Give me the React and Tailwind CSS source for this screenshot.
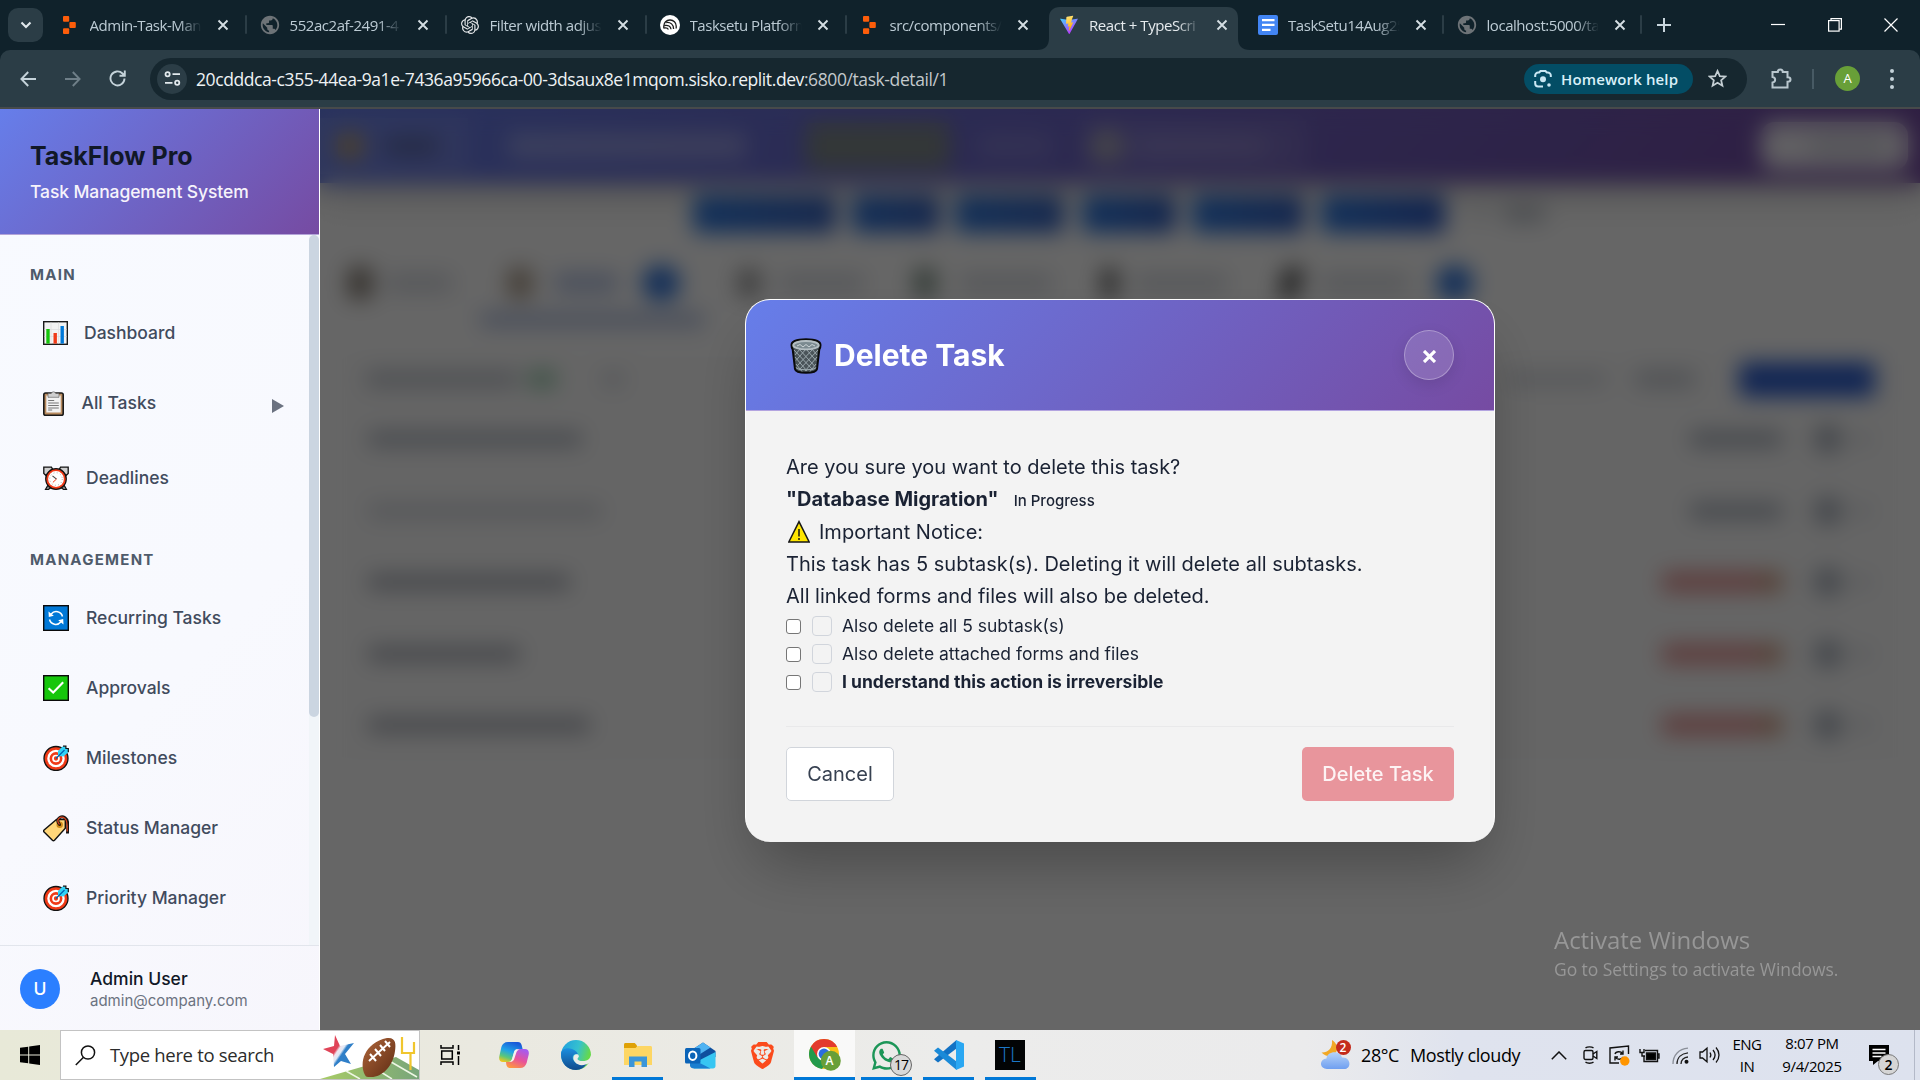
import React from "react";
import { SiOpenai, SiBrave } from "react-icons/si";
import { FaWhatsapp } from "react-icons/fa";
import { MdPublic } from "react-icons/md";

/* ---------- browser icons ---------- */

const Replit = () => (
  <svg className="h-[18px] w-[13px]" viewBox="0 0 13 18" fill="#fd5d0a">
    <rect x="0" y="0" width="6.2" height="5.7" rx="1" />
    <rect x="6.4" y="6" width="6.4" height="5.9" rx="1" />
    <rect x="0" y="12.2" width="6.2" height="5.8" rx="1" />
  </svg>
);

const Vite = () => (
  <svg className="h-[20px] w-[20px]" viewBox="0 0 32 32">
    <defs>
      <linearGradient id="vt1" x1="0" y1="0" x2="0.6" y2="1">
        <stop offset="0" stopColor="#41d1ff" />
        <stop offset="1" stopColor="#bd34fe" />
      </linearGradient>
      <linearGradient id="vt2" x1="0" y1="0" x2="0.2" y2="1">
        <stop offset="0" stopColor="#ffea83" />
        <stop offset="1" stopColor="#ffa800" />
      </linearGradient>
    </defs>
    <path fill="url(#vt1)" d="M29.9 6.8 17 30a.7.7 0 0 1-1.2 0L2.1 6.8c-.3-.5.2-1.1.8-1l13.1 2.3 13-2.3c.6-.1 1.1.5.9 1z" />
    <path fill="url(#vt2)" d="M22.3 1l-9.7 1.9-.8.7-.6 10.4 3.8-.5-.9 5 2.8-.6-1.4 7 .8.3 6.6-13.6-3.5.7 1.3-5.7 2.1-5.1z" />
  </svg>
);

const Docs = () => (
  <svg className="h-[20px] w-[20px]" viewBox="0 0 20 20">
    <rect width="20" height="20" rx="2" fill="#4285f4" />
    <path d="M4 5.2h12.5M4 9.8h12.5M4 14.8h8.5" stroke="#fff" strokeWidth="2.2" />
  </svg>
);

const TasksetuMark = () => (
  <svg className="h-[20px] w-[20px]" viewBox="0 0 20 20">
    <circle cx="10" cy="10" r="10" fill="#fff" />
    <g fill="none" stroke="#1c1c1c" strokeWidth="1.3">
      <path d="M3.800 13.500V11a6 6 0 0 1 6-6h.4a6 6 0 0 1 6 6v2.500" />
      <path d="M6.200 7.500c4.500-.5 7.400 2 7.400 6.500" />
      <path d="M4.200 10.500c4-.8 6.600.8 6.800 3.800" />
      <path d="M4.200 13c2-.5 3.500 0 4.200 1.500" />
    </g>
  </svg>
);

const Cross = ({ className }) => (
  <svg className={className} viewBox="0 0 12 12" fill="none" stroke="currentColor" strokeWidth="1.9">
    <path d="M1.500 1.500l9 9M10.500 1.500l-9 9" />
  </svg>
);

const tabs = [
  { t: "Admin-Task-Man", icon: <Replit />, w: "w-[200px]" },
  { t: "552ac2af-2491-4", icon: <MdPublic className="h-[22px] w-[22px] text-[#6d7377]" />, w: "w-[200px]" },
  { t: "Filter width adjus", icon: <SiOpenai className="h-[18px] w-[18px] text-[#e3e6e8]" />, w: "w-[200px]" },
  { t: "Tasksetu Platform", icon: <TasksetuMark />, w: "w-[200px]" },
  { t: "src/components/", icon: <Replit />, w: "w-[199.5px]" },
  { t: "React + TypeScri", icon: <Vite />, w: "w-[199px]", active: true },
  { t: "TaskSetu14Aug25", icon: <Docs />, w: "w-[198.5px]" },
  { t: "localhost:5000/ta", icon: <MdPublic className="h-[22px] w-[22px] text-[#6d7377]" />, w: "w-[198px]" },
];

const Tab = ({ tab, sep }) => (
  <div className={`relative flex h-[50px] ${tab.w} shrink-0 items-center pl-[12px]`}>
    {tab.active && (
      <svg className="absolute -left-[9px] top-[7px] h-[43px] w-[213px]" viewBox="0 0 213 43" fill="#2b3d46">
        <path d="M0 43c8 0 12-4 12-12V11C12 4 16 0 23 0h167c7 0 11 4 11 11v20c0 8 4 12 12 12z" />
      </svg>
    )}
    <div className="relative flex w-[22px] justify-center">{tab.icon}</div>
    <div
      className={`relative ml-[9px] mt-[1px] w-[113px] whitespace-nowrap text-[15px] tracking-[-0.45px] [mask-image:linear-gradient(to_right,black_78%,transparent_99%)] ${
        tab.active ? "text-[#e6ebee]" : "text-[#bccbd4]"
      }`}
    >
      {tab.t}
    </div>
    <Cross className="relative ml-[14px] h-[12px] w-[12px] text-[#d5dee3]" />
    {sep && <div className="absolute right-0 top-[15px] h-[19px] w-[2px] rounded bg-[#2b3d46]" />}
  </div>
);

const Browser = () => (
  <div className="h-[109px] bg-[#10222b] font-['Open_Sans','Noto_Sans',sans-serif]">
    <div className="flex h-[50px] items-center">
      <div className="ml-[8px] mr-[3.5px] flex h-[34px] w-[35px] shrink-0 items-center justify-center rounded-[10px] bg-[#2b3d46]">
        <svg className="h-[8px] w-[12px]" viewBox="0 0 12 8" fill="none" stroke="#e1e8ec" strokeWidth="2.1">
          <path d="M1.500 1.500L6 6l4.500-4.500" />
        </svg>
      </div>
      {tabs.map((tab, i) => (
        <Tab key={i} tab={tab} sep={i !== 4 && i !== 5} />
      ))}
      <svg className="ml-[15px] h-[14px] w-[14px]" viewBox="0 0 14 14" stroke="#c9d6dd" strokeWidth="2">
        <path d="M7 0v14M0 7h14" />
      </svg>
      <div className="ml-auto mr-[22px] flex items-center gap-[42.5px]">
        <svg className="h-[14px] w-[14px]" viewBox="0 0 14 14" stroke="#fff" strokeWidth="1.200">
          <path d="M0 6.500h14" />
        </svg>
        <svg className="h-[14px] w-[14px]" viewBox="0 0 14 14" fill="none" stroke="#fff" strokeWidth="1.200">
          <rect x="0.600" y="2.600" width="10.500" height="10.500" />
          <path d="M3 2.500V.6h10.400v10.500h-2" />
        </svg>
        <svg className="h-[14px] w-[14px]" viewBox="0 0 14 14" stroke="#fff" strokeWidth="1.200">
          <path d="M.5.5l13 13M13.500.5l-13 13" />
        </svg>
      </div>
    </div>
    <div className="flex h-[59px] items-center rounded-t-[10px] border-b-2 border-[#474a4b] bg-[#2b3d46]">
      <svg className="ml-[20px] h-[16px] w-[16px]" viewBox="0 0 16 16" fill="none" stroke="#c5d3da" strokeWidth="1.900">
        <path d="M16 8H1.500M8.200 1L1.400 8l6.800 7" />
      </svg>
      <svg className="ml-[29px] h-[16px] w-[16px]" viewBox="0 0 16 16" fill="none" stroke="#6f7f88" strokeWidth="1.900">
        <path d="M0 8h14.500M7.800 1l6.800 7-6.800 7" />
      </svg>
      <svg className="ml-[28px] h-[17px] w-[17px]" viewBox="0 0 17 17" fill="none" stroke="#c5d3da" strokeWidth="1.900">
        <path d="M15.500 8.500a7 7 0 1 1-2-5l2 2M15.800.5v5.300h-5.300" />
      </svg>
      <div className="ml-[24px] flex h-[42px] w-[1597px] items-center rounded-full bg-[#16272f] pl-[7px]">
        <div className="flex h-[30px] w-[30px] items-center justify-center rounded-full bg-[#2b3d46]">
          <svg className="h-[15px] w-[17px]" viewBox="0 0 17 15" fill="none" stroke="#e3eaee" strokeWidth="1.800">
            <circle cx="3.600" cy="3.200" r="2.100" />
            <path d="M8.500 3.200H16M1 11.800h7.500" />
            <circle cx="13.200" cy="11.800" r="2.100" />
          </svg>
        </div>
        <div className="ml-[9px] mt-[2px] whitespace-nowrap text-[17.5px] tracking-[-0.41px] text-[#eef2f4]">
          20cdddca-c355-44ea-9a1e-7436a95966ca-00-3dsaux8e1mqom.sisko.replit.dev<span className="text-[#c3c9cc]">:6800/task-detail/1</span>
        </div>
        <div className="ml-auto flex h-[30px] w-[169px] items-center rounded-full bg-[#034d65] pl-[10px]">
          <svg className="h-[18px] w-[18px]" viewBox="0 0 18 18" fill="none" stroke="#c9e8f4" strokeWidth="2">
            <path d="M1.200 7V5.500a3 3 0 0 1 3-3h1L6.500 1h5l1.300 1.500h1a3 3 0 0 1 3 3V7M1.200 11v2.500a3 3 0 0 0 3 3H9" />
            <circle cx="9" cy="9.300" r="3" fill="#c9e8f4" stroke="none" />
            <circle cx="15" cy="15" r="1.800" fill="#c9e8f4" stroke="none" />
          </svg>
          <span className="ml-[9px] mt-[2px] whitespace-nowrap text-[15px] font-semibold tracking-[0.13px] text-[#d8f0f9]">Homework help</span>
        </div>
        <svg className="ml-[15px] mr-[20px] h-[19px] w-[19px]" viewBox="0 0 24 24" fill="none" stroke="#c5cfd4" strokeWidth="2.200">
          <path d="M12 2.500l2.900 6.500 7 .6-5.300 4.600 1.600 6.900L12 17.400l-6.200 3.700 1.600-6.900L2.100 9.600l7-.6z" />
        </svg>
      </div>
      <svg className="ml-[24px] h-[21px] w-[21px]" viewBox="0 0 21 21" fill="none" stroke="#b9c7ce" strokeWidth="2">
        <path d="M1.500 4h5.300c0-3.500 5-3.500 5 0h4.700v5.300c4 0 4 4.500 0 4.500v5.700h-15v-5c3.500-.5 3.500-5 0-5.500z" />
      </svg>
      <div className="ml-[20px] h-[20px] w-[2px] bg-[#475a64]" />
      <div className="ml-[21px] flex h-[25px] w-[25px] items-center justify-center rounded-full bg-[#689f38] text-[13px] text-white">A</div>
      <div className="ml-[30px] flex flex-col gap-[4px]">
        <div className="h-[4px] w-[4px] rounded-full bg-[#c5d3da]" />
        <div className="h-[4px] w-[4px] rounded-full bg-[#c5d3da]" />
        <div className="h-[4px] w-[4px] rounded-full bg-[#c5d3da]" />
      </div>
    </div>
  </div>
);

/* ---------- sidebar emoji drawings ---------- */

const Chart = () => (
  <svg className="h-[24px] w-[25px]" viewBox="0 0 25 24">
    <rect x="0.700" y="0.700" width="23.600" height="22.600" fill="#f2f2f2" stroke="#1a1a1a" strokeWidth="1.400" />
    <path d="M8 1.500v21M15.500 1.500v21M1.500 8.500h22M1.500 15.500h22" stroke="#dedede" strokeWidth="0.800" />
    <rect x="3.300" y="8" width="3.400" height="14.600" fill="#16c60c" />
    <rect x="10.500" y="12" width="3.400" height="10.600" fill="#f03a17" />
    <rect x="17.500" y="5" width="3.400" height="17.600" fill="#0078d7" />
  </svg>
);

const Clipboard = () => (
  <svg className="h-[26px] w-[21px]" viewBox="0 0 21 26">
    <rect x="0.800" y="3" width="19.400" height="22.200" rx="1.800" fill="#b98b5e" stroke="#1a1a1a" strokeWidth="1.600" />
    <rect x="3.300" y="5.500" width="14.400" height="17" fill="#f2f2f2" />
    <path d="M5 3.500h3.200a2.400 2.400 0 0 1 4.600 0H16v3.800H5z" fill="#cfcfcf" stroke="#555" strokeWidth="0.600" />
    <path d="M5.200 10.500h6M5.200 13h10.600M5.200 15.500h10.600M5.200 18h10.600M5.200 20h4" stroke="#777" strokeWidth="1" />
  </svg>
);

const Alarm = () => (
  <svg className="h-[25px] w-[26px]" viewBox="0 0 26 25">
    <path d="M5 19l-2.500 4.500h3L8 21.500M21 19l2.500 4.500h-3L18 21.500" fill="#888" stroke="#111" strokeWidth="1.200" />
    <path d="M.8 7.500V1.200h7.600L9.500 3 3 9.500zM25.200 7.500V1.200h-7.600L16.500 3 23 9.500z" fill="#cfcfcf" stroke="#111" strokeWidth="1.300" />
    <circle cx="13" cy="13" r="10.300" fill="#f03a17" stroke="#111" strokeWidth="1.200" />
    <circle cx="13" cy="13" r="7.900" fill="#fff" />
    <circle cx="13" cy="13" r="6.300" fill="none" stroke="#999" strokeWidth="0.900" strokeDasharray="0.900 2.400" />
    <path d="M9.500 9.800l4 3.300" stroke="#444" strokeWidth="1.100" />
    <path d="M13.500 13l-3.600 3.400" stroke="#f03a17" strokeWidth="1" />
  </svg>
);

const Recur = () => (
  <svg className="h-[26px] w-[26px]" viewBox="0 0 26 26">
    <rect x="0.700" y="0.700" width="24.600" height="24.600" fill="#0078d7" stroke="#0a0a0a" strokeWidth="1.400" />
    <g fill="none" stroke="#fff" strokeWidth="1.500">
      <path d="M8.200 9A6.500 6.500 0 0 1 19.500 11.500M17.800 17A6.500 6.500 0 0 1 6.500 14.500" />
    </g>
    <path d="M5.500 6.500l.3 5.500 5-1.200zM20.500 19.500l-.3-5.500-5 1.200z" fill="#fff" />
  </svg>
);

const Check = () => (
  <svg className="h-[26px] w-[26px]" viewBox="0 0 26 26">
    <rect x="0.700" y="0.700" width="24.600" height="24.600" fill="#16c60c" stroke="#0a0a0a" strokeWidth="1.400" />
    <path d="M5.600 13.200l4.600 4.400L20.200 7.200" fill="none" stroke="#fff" strokeWidth="2.100" />
  </svg>
);

const Target = () => (
  <svg className="h-[26px] w-[26px]" viewBox="0 0 26 26">
    <circle cx="13" cy="13.500" r="12" fill="#f03a17" stroke="#111" strokeWidth="1.300" />
    <circle cx="13" cy="13.500" r="7.600" fill="none" stroke="#fff" strokeWidth="2.300" />
    <circle cx="13" cy="13.500" r="3" fill="none" stroke="#fff" strokeWidth="1.700" />
    <path d="M15 11V6l4.500-4.500h3.200v2h2.500v3.700l-4.700 4.300z" fill="#31d2f7" />
    <path d="M20 1.200h2.900v2.300h2.400v3.800" fill="none" stroke="#111" strokeWidth="1.200" />
    <path d="M13 13.500l8.500-8.500" stroke="#0063b1" strokeWidth="1.300" />
  </svg>
);

const Tag = () => (
  <svg className="h-[27px] w-[26px]" viewBox="0 0 26 27">
    <path d="M13.500 4.500h8.800v8.800L11.500 25.200a1.500 1.500 0 0 1-2.100 0L1.100 17a1.500 1.500 0 0 1 0-2.100z" fill="#ffd679" stroke="#111" strokeWidth="1.400" />
    <circle cx="16.700" cy="9.800" r="3.200" fill="#d08a1a" />
    <circle cx="16.700" cy="9.800" r="1.300" fill="#241400" />
    <path d="M16.500 9.500C12 4 18 0 22 2.800c3 2 3.200 6 2.500 15.700" fill="none" stroke="#111" strokeWidth="3" />
    <path d="M16.500 9.500C12 4 18 .6 21.700 3.200c2.700 2 2.900 6 2.500 13.300" fill="none" stroke="#d9431a" strokeWidth="1.300" />
  </svg>
);

const NavItem = ({ icon, label, gap = "ml-[18px]", arrow, h = "h-[70px]" }) => (
  <div className={`flex ${h} items-center pl-[42.5px]`}>
    {icon}
    <span className={`${gap} text-[17.5px] font-medium leading-none text-[#414b5d]`}>{label}</span>
    {arrow && (
      <svg className="ml-auto mr-[25.5px] mt-[5px] h-[14px] w-[12px]" viewBox="0 0 12 14" fill="#6b7280">
        <path d="M0 0l12 7-12 7z" />
      </svg>
    )}
  </div>
);

const Sidebar = () => (
  <aside className="flex h-[921px] w-[320px] shrink-0 flex-col border-r border-white bg-[linear-gradient(135deg,#f8faff_0%,#f8f9fe_60%,#f7f6fc_100%)]">
    <div className="h-[126px] border-b border-[#b3a4d8] bg-[linear-gradient(135deg,#667eea_0%,#764ba2_100%)] pl-[30px] pt-[30px]">
      <div className="text-[25px] font-bold leading-[35px] text-[#111827]">TaskFlow Pro</div>
      <div className="mt-[5px] text-[17.5px] font-medium leading-[25px] tracking-[-0.1px] text-[#f6f3fb]">Task Management System</div>
    </div>
    <div className="flex h-[710px] justify-between">
      <div className="flex-1">
        <div className="flex h-[63px] items-center pl-[30px] pt-[17px] text-[15px] font-bold tracking-[1.25px] text-[#4f5b6b]">MAIN</div>
        <NavItem icon={<Chart />} label="Dashboard" gap="ml-[16.5px]" />
        <NavItem icon={<Clipboard />} label="All Tasks" arrow />
        <NavItem icon={<Alarm />} label="Deadlines" gap="ml-[17.5px]" h="h-[80px]" />
        <div className="flex h-[65px] items-center pl-[30px] pt-[20px] text-[15px] font-bold tracking-[1.25px] text-[#4f5b6b]">MANAGEMENT</div>
        <NavItem icon={<Recur />} label="Recurring Tasks" gap="ml-[17.5px]" />
        <NavItem icon={<Check />} label="Approvals" gap="ml-[17.5px]" />
        <NavItem icon={<Target />} label="Milestones" gap="ml-[17.5px]" />
        <NavItem icon={<Tag />} label="Status Manager" gap="ml-[17.5px]" />
        <NavItem icon={<Target />} label="Priority Manager" gap="ml-[17.5px]" />
      </div>
      <div className="w-[10px] bg-[#f1f5f9]">
        <div className="h-[482px] rounded-full bg-[#cbd5e1]" />
      </div>
    </div>
    <div className="flex flex-1 items-center border-t border-[#e2e5ec] pl-[20px]">
      <div className="mt-[2px] flex h-[40px] w-[40px] items-center justify-center rounded-full bg-[#2b7fff] text-[17.5px] font-medium text-white">U</div>
      <div className="ml-[30px] mt-[2px]">
        <div className="text-[17.5px] font-medium leading-[24px] text-[#111827]">Admin User</div>
        <div className="text-[15px] leading-[20px] text-[#6b7280]">admin@company.com</div>
      </div>
    </div>
  </aside>
);

/* ---------- page under the overlay ---------- */

const Bar = ({ c }) => <div className={`shrink-0 rounded ${c}`} />;

const Row = ({ name, red }) => (
  <div className="flex h-[71.500px] items-center border-t border-gray-100 pl-[27px] pr-[30px]">
    <Bar c={`h-[14px] ${name}`} />
    {red ? (
      <>
        <Bar c="ml-auto h-[20px] w-[96px] bg-[#d8504f]/60" />
        <Bar c="h-[20px] w-[24px] bg-[#c0704a]/70" />
      </>
    ) : (
      <Bar c="ml-auto h-[16px] w-[92px] bg-gray-400/80" />
    )}
    <Bar c="ml-[31px] h-[30px] w-[30px] rounded-full bg-gray-400/80" />
    <Bar c="ml-[14px] h-[14px] w-[12px] bg-gray-300" />
  </div>
);

const Backdrop = () => (
  <div className="h-[921px] w-[1600px] bg-white">
    <div className="flex h-[74px] items-center bg-[linear-gradient(135deg,#667eea_0%,#764ba2_100%)] shadow-[0_8px_32px_rgba(0,0,0,0.25)]">
      <div className="flex h-[56px] w-[148px] items-center bg-white/10">
        <Bar c="ml-[18px] h-[24px] w-[24px] bg-[#c2a466]" />
        <Bar c="ml-[22px] h-[18px] w-[54px] bg-[#374151]/40" />
      </div>
      <Bar c="ml-[40px] h-[26px] w-[238px] bg-white/30" />
      <Bar c="ml-[60px] h-[46px] w-[144px] bg-[#808a8a]" />
      <Bar c="ml-[28px] h-[24px] w-[74px] bg-white/15" />
      <div className="ml-[30px] flex h-[50px] w-[224px] items-center bg-white/10">
        <Bar c="ml-[8px] h-[32px] w-[34px] rounded-full bg-[#b9bab0]/80" />
        <Bar c="ml-[12px] h-[20px] w-[130px] bg-white/15" />
      </div>
      <div className="ml-auto mr-[12px] flex h-[48px] w-[147px] items-center justify-end rounded-[14px] bg-white/90 pr-[22px]">
        <Bar c="h-[16px] w-[76px] bg-gray-400/40" />
      </div>
    </div>
    <div className="mt-[12px] flex h-[38px] items-center pl-[373px]">
      <Bar c="h-[38px] w-[143px] bg-[linear-gradient(90deg,#2f7ae0,#3a64c0)]" />
      <Bar c="ml-[16px] h-[38px] w-[88px] bg-[linear-gradient(90deg,#3176da,#3a64c0)]" />
      <Bar c="ml-[15px] h-[38px] w-[109px] bg-[linear-gradient(90deg,#3179dc,#3a66c2)]" />
      <Bar c="ml-[18px] h-[38px] w-[94px] bg-[linear-gradient(90deg,#2f7ae0,#3560c0)]" />
      <Bar c="ml-[16px] h-[38px] w-[112px] bg-[linear-gradient(90deg,#2f7ae0,#3560c0)]" />
      <Bar c="ml-[17px] h-[38px] w-[124px] bg-[linear-gradient(90deg,#2f7ae0,#2f58c0)]" />
      <Bar c="ml-[28px] h-[10px] w-[14px] bg-gray-300" />
      <Bar c="ml-[16px] h-[18px] w-[42px] bg-gray-400/60" />
    </div>
    <div className="mt-[27px] flex h-[46px] items-center pl-[28px]">
      <Bar c="h-[32px] w-[24px] bg-[#857c72]" />
      <Bar c="ml-[14px] h-[20px] w-[66px] bg-gray-300/80" />
      <Bar c="ml-[56px] h-[30px] w-[24px] bg-[#aa9a88]" />
      <Bar c="ml-[22px] h-[20px] w-[64px] bg-[#b8c6e6]" />
      <Bar c="ml-[24px] h-[36px] w-[38px] rounded-full bg-[#2f74dc]" />
      <Bar c="ml-[58px] h-[28px] w-[22px] bg-[#9a9a9a]" />
      <Bar c="ml-[20px] h-[20px] w-[84px] bg-gray-300/80" />
      <Bar c="ml-[50px] h-[30px] w-[22px] bg-[#81958a]" />
      <Bar c="ml-[24px] h-[20px] w-[92px] bg-gray-300/80" />
      <Bar c="ml-[50px] h-[30px] w-[15px] bg-[#555]" />
      <Bar c="ml-[18px] h-[20px] w-[92px] bg-gray-300/80" />
      <Bar c="ml-[54px] h-[32px] w-[20px] bg-[#555] -skew-x-12" />
      <Bar c="ml-[20px] h-[20px] w-[88px] bg-gray-300/80" />
      <Bar c="ml-[27px] h-[36px] w-[37px] rounded-full bg-[#2f74dc]" />
    </div>
    <div className="flex h-[20px] items-end pl-[160px]">
      <Bar c="h-[13px] w-[224px] bg-[#a9b9de]" />
    </div>
    <div className="mx-[20px] mt-[28px] border border-gray-100 bg-[#fdfdfd]">
      <div className="flex h-[48px] items-center pl-[25px] pr-[24px]">
        <Bar c="h-[16px] w-[152px] bg-gray-400/60" />
        <Bar c="ml-[10px] h-[16px] w-[28px] bg-[#8fc9a6]" />
        <Bar c="ml-[46px] h-[14px] w-[22px] bg-gray-300" />
        <Bar c="ml-auto h-[12px] w-[100px] bg-gray-300" />
        <Bar c="ml-[28px] h-[18px] w-[60px] bg-gray-400/50" />
        <Bar c="ml-[44px] h-[35px] w-[136px] bg-[#2c5ed0]" />
      </div>
      <Row name="w-[214px] bg-gray-400/80" />
      <Row name="w-[234px] bg-gray-300" />
      <Row name="w-[202px] bg-gray-500/60" red />
      <Row name="w-[152px] bg-gray-500/60" red />
      <Row name="w-[222px] bg-gray-500/60" red />
    </div>
  </div>
);

/* ---------- modal ---------- */

const Trash = () => (
  <svg className="h-[36px] w-[34px]" viewBox="0 0 34 36">
    <path d="M2.500 7C2.500 3.500 8 1.200 17 1.200S31.500 3.500 31.500 7c0 2-.5 3.500-1.200 4.500L28 31c-.5 2.500-5 3.800-11 3.800S6.500 33.500 6 31L3.700 11.500C3 10.500 2.500 9 2.500 7z" fill="#4a5459" stroke="#0a0a0a" strokeWidth="2" />
    <g fill="none" stroke="#9aa7ac" strokeWidth="1">
      <path d="M5 12l19 20M10 11l15.500 17M17 11l10 11.500M23 11l5 6M6 19l12 14M7 26l6 7.500" />
      <path d="M29 12L10 32M24 11L8 28M17 11L7 22.500M11 11l-5 6M28 19L16 33M27 26l-6 7.500" />
    </g>
    <ellipse cx="17" cy="7.200" rx="12.700" ry="4.200" fill="#7b8a90" stroke="#b4bec2" strokeWidth="1.900" />
    <path d="M8 8l3-1.500L14 9l3-2.500L20 9l3-2.500 3 1.500" fill="none" stroke="#d5dbde" strokeWidth="0.900" />
    <path d="M7 29.500c2 3 18 3 20 0" fill="none" stroke="#9aa7ac" strokeWidth="1.200" />
  </svg>
);

const Warning = () => (
  <svg className="ml-[2px] mr-[9px] h-[23px] w-[22px] shrink-0" viewBox="0 0 22 23">
    <path d="M11 1.600L21.200 22H.8z" fill="#ffe600" stroke="#161616" strokeWidth="1.500" />
    <path d="M11 9v7.500M11 18v2" stroke="#161616" strokeWidth="1.500" />
  </svg>
);

const Option = ({ children, bold }) => (
  <div className={`flex h-[28px] items-center text-[17.5px] leading-none text-[#1a2233] ${bold ? "font-bold" : ""}`}>
    <div className="h-[15px] w-[15px] rounded-[3px] border border-[#767676] bg-white" />
    <div className="ml-[11px] h-[20px] w-[20px] rounded-[4px] border border-[#d1d5dc]" />
    <span className="ml-[10px] whitespace-nowrap">{children}</span>
  </div>
);

const Modal = () => (
  <div className="h-[543px] w-[750px] overflow-hidden rounded-[25px] border border-b-0 border-white bg-[#f3f3f3] shadow-[0_31px_62px_-12px_rgba(0,0,0,0.3)]">
    <div className="flex h-[111px] items-center border-b border-[#b3a4e0] bg-[linear-gradient(135deg,#667eea_0%,#764ba2_100%)] pl-[43px] pr-[40px]">
      <div className="mt-[2px]">
        <Trash />
      </div>
      <span className="ml-[11px] text-[30px] font-bold leading-none text-white">Delete Task</span>
      <div className="ml-auto flex h-[50px] w-[50px] items-center justify-center rounded-full border border-white/30 bg-white/15 pt-[3px] shadow-[0_5px_15px_rgba(0,0,0,0.1)]">
        <svg className="h-[13px] w-[13px]" viewBox="0 0 13 13" stroke="#fff" strokeWidth="3.200">
          <path d="M1 1l11 11M12 1L1 12" />
        </svg>
      </div>
    </div>
    <div className="px-[40px] pt-[40px] text-[20px] leading-[32px] text-[#1a2233]">
      <div>Are you sure you want to delete this task?</div>
      <div className="flex h-[32px] items-baseline">
        <span className="font-bold">"Database Migration"</span>
        <span className="ml-[15px] text-[15px] font-medium">In Progress</span>
      </div>
      <div className="flex h-[33px] items-center">
        <Warning />
        Important Notice:
      </div>
      <div>This task has 5 subtask(s). Deleting it will delete all subtasks.</div>
      <div>All linked forms and files will also be deleted.</div>
      <Option>Also delete all 5 subtask(s)</Option>
      <Option>Also delete attached forms and files</Option>
      <Option bold>I understand this action is irreversible</Option>
      <div className="mt-[30px] flex items-center justify-between border-t border-[#e9e9ea] pt-[20px]">
        <div className="flex h-[54px] w-[108px] items-center justify-center rounded-[5px] border border-[#d1d5db] bg-white text-[#374151]">Cancel</div>
        <div className="flex h-[54px] w-[152px] items-center justify-center rounded-[5px] bg-[#e8959c] font-medium text-[#fdf3f4]">Delete Task</div>
      </div>
    </div>
  </div>
);

/* ---------- taskbar ---------- */

const Football = () => (
  <svg className="h-[48px] w-[99px]" viewBox="0 0 99 48">
    <defs>
      <linearGradient id="fb" x1="0" y1="0" x2="1" y2="1">
        <stop offset="0" stopColor="#b0663a" />
        <stop offset="1" stopColor="#5e2c14" />
      </linearGradient>
      <linearGradient id="fld" x1="0" y1="0" x2="1" y2="0">
        <stop offset="0" stopColor="#a8cc66" />
        <stop offset="1" stopColor="#78a57a" />
      </linearGradient>
      <linearGradient id="st" x1="0" y1="0.200" x2="1" y2="0.900">
        <stop offset="0.400" stopColor="#e04458" />
        <stop offset="0.460" stopColor="#eee6f0" />
        <stop offset="0.540" stopColor="#dfe8f5" />
        <stop offset="0.600" stopColor="#2f7fc8" />
      </linearGradient>
    </defs>
    <path d="M0 48l76-22 23 13v9z" fill="url(#fld)" />
    <path d="M26 40l14 8M48 33l24 15M66 28l31 18" stroke="#eef7e4" strokeWidth="1.500" />
    <path d="M82 7v15h12V12M90.500 22v17M82 7v-1M94 12v-1" fill="none" stroke="#f0c62e" strokeWidth="2.200" />
    <path d="M15 4l5 11 14-3-9 11 6 10-10-3-7 6-1-13L3 18l11-3z" fill="url(#st)" />
    <path d="M45 44c-6-12-1-32 22-37 9-1 9 6 8 13-2 16-14 27-25 26-3 0-4 0-5-2z" fill="url(#fb)" />
    <path d="M49 30L70 11M50 23l6 7M55 18l6 7M60 14l5 6M65 10l5 6" stroke="#fff" strokeWidth="2" />
  </svg>
);

const Copilot = () => (
  <svg className="h-[28px] w-[30px]" viewBox="0 0 30 28">
    <defs>
      <linearGradient id="cp1" x1="0.600" y1="0" x2="0.200" y2="1">
        <stop offset="0" stopColor="#1a58d8" />
        <stop offset="0.450" stopColor="#1fa3e8" />
        <stop offset="0.750" stopColor="#5bc77a" />
        <stop offset="1" stopColor="#f3c61a" />
      </linearGradient>
      <linearGradient id="cp2" x1="0.700" y1="0" x2="0.200" y2="1">
        <stop offset="0" stopColor="#a55bf0" />
        <stop offset="0.500" stopColor="#e8529a" />
        <stop offset="1" stopColor="#ff9a3c" />
      </linearGradient>
    </defs>
    <path d="M9 1h10c2 0 3 1 3.600 3l1 4h-5c-2 0-3 1-3.600 3l-2 7c-.7 2-2 3-4 3H4c-3 0-4.500-2-3.600-6l2-9C3.200 3 5.500 1 9 1z" fill="url(#cp1)" />
    <path d="M21 27H11c-2 0-3-1-3.600-3L7 21h4c2 0 3-1 3.600-3l2-7c.7-2 2-3 4-3H26c3 0 4.500 2 3.600 6l-2 8c-1 3-3.100 5-6.600 5z" fill="url(#cp2)" />
    <path d="M15 11.500c.5-2 1.500-3 3.500-3h2.200c-2 .5-3 1.500-3.500 3.500l-2 6c-.5 1.500-1.500 2.500-3.200 2.500h-1.500c1.500-.3 2.300-1.300 2.800-3z" fill="#f4f2ee" />
  </svg>
);

const Edge = () => (
  <svg className="h-[30px] w-[30px]" viewBox="0 0 30 30">
    <defs>
      <linearGradient id="eg1" x1="0" y1="0" x2="1" y2="0.300">
        <stop offset="0" stopColor="#1f9de0" />
        <stop offset="0.600" stopColor="#35c1cf" />
        <stop offset="1" stopColor="#66d94a" />
      </linearGradient>
      <linearGradient id="eg2" x1="0" y1="0" x2="0" y2="1">
        <stop offset="0" stopColor="#1b8fe0" />
        <stop offset="1" stopColor="#114a8b" />
      </linearGradient>
    </defs>
    <circle cx="15" cy="15" r="15" fill="url(#eg1)" />
    <path d="M0 14C0 9 6 7 11 9c4 1.500 6 4 6 6-4-3-7 2-4 6 3 4 9 4 14 1-3 5-7 8-12 8C6 30 0 23 0 14z" fill="url(#eg2)" />
    <path d="M17 14.500c2 2 0 3-.5 4.300-.3 1.200 3 2.700 7 2.200 4-.6 6-3 6.500-6l.5 4-2.500 4c-5 3-11 3-14-1-3.500-4-1-9 3-7.500z" fill="#ecece8" />
  </svg>
);

const Explorer = () => (
  <svg className="h-[24px] w-[28px]" viewBox="0 0 28 24">
    <path d="M0 1.500C0 .7.600 0 1.500 0h9.200l2.300 2.500V6H0z" fill="#dfa106" />
    <path d="M0 5h11.500l2-2H26.500c.9 0 1.500.6 1.500 1.500V22H0z" fill="#fdd663" />
    <path d="M5 13.500h18V24h-5.500v-5.500h-7V24H5z" fill="#3b96d9" />
  </svg>
);

const Outlook = () => (
  <svg className="h-[27px] w-[31px]" viewBox="0 0 31 27">
    <path d="M5 9L18 .5 30.500 9v6L17 20 5 14z" fill="#0f4f9e" />
    <path d="M9 6.500L18 .5l7.500 5L12 14z" fill="#4fb3f2" />
    <path d="M30.500 10v14c0 1.500-1 2.500-2.500 2.500H9L7 22z" fill="#37c6f2" />
    <path d="M5 16l20.500 10.500H9c-2 0-4-1-4-3z" fill="#1a7fd0" />
    <rect x="0" y="6" width="15.500" height="15.500" rx="1.500" fill="#0b64b8" />
    <ellipse cx="7.700" cy="13.700" rx="3.700" ry="4.200" fill="none" stroke="#fff" strokeWidth="2" />
  </svg>
);

const Chrome = () => (
  <svg className="h-[32px] w-[32px]" viewBox="0 0 32 32">
    <circle cx="15" cy="15" r="15" fill="#fbc116" />
    <path d="M15 15L2 7.500A15 15 0 0 0 13 29.900L21 18z" fill="#239a4b" />
    <path d="M2 7.500A15 15 0 0 1 28.200 8H15L8.500 18.500z" fill="#e33b2e" />
    <circle cx="15" cy="15" r="7" fill="#fff" />
    <circle cx="15" cy="15" r="5.400" fill="#2a6de0" />
    <circle cx="21.800" cy="21.800" r="10" fill="#689f38" />
  </svg>
);

const VSCode = () => (
  <svg className="h-[30px] w-[30px]" viewBox="0 0 30 30">
    <path d="M22.500 0v8.500L4 22.500 0 19.200z" fill="#1272c4" />
    <path d="M22.500 30v-8.500L4 7.500 0 10.800z" fill="#1a8ad8" />
    <path d="M22 0l8 3.500v23L22 30z" fill="#2aa7f2" />
  </svg>
);

const Weather = () => (
  <svg className="h-[30px] w-[31px]" viewBox="0 0 31 30">
    <defs>
      <linearGradient id="cl" x1="0" y1="0" x2="0" y2="1">
        <stop offset="0" stopColor="#b6d3f9" />
        <stop offset="1" stopColor="#6f9ff0" />
      </linearGradient>
    </defs>
    <path d="M11 0c5 3 7 9 3 14C10 18 4 16 .5 12.500 6 13 12 9 11 0z" fill="#f2a825" />
    <path d="M6 29c-8 0-8-10-.5-10.500C6 11 19 10 21 17.500c9-1 10 11.500 2 11.500z" fill="url(#cl)" />
    <circle cx="22.500" cy="7.500" r="7.500" fill="#c42b1c" />
  </svg>
);

const AppSlot = ({ children, active, running, w = "w-[62px]", line = "w-[51px]" }) => (
  <div className={`relative flex h-[50px] shrink-0 items-center justify-center ${w} ${active ? "bg-white/70" : ""}`}>
    {children}
    {running && <div className={`absolute bottom-0 h-[3px] bg-[#0078d7] ${line}`} />}
  </div>
);

const Taskbar = () => (
  <div className="flex h-[50px] items-center bg-[linear-gradient(90deg,#e8e9d8_0%,#eae9e0_25%,#ececeb_50%,#ebebec_68%,#dfe3ee_76%,#dde2ee_100%)] font-['Open_Sans','Noto_Sans',sans-serif] text-black">
    <div className="flex w-[60px] shrink-0 justify-center">
      <svg className="h-[20px] w-[20px]" viewBox="0 0 20 20">
        <path d="M0 2.800L8.200 1.700v7.800H0zM9.200 1.500L20 0v9.500H9.200zM0 10.500h8.200v7.800L0 17.200zM9.200 10.500H20V20L9.200 18.500z" />
      </svg>
    </div>
    <div className="flex h-[50px] w-[360px] shrink-0 items-center border border-[#c3c3c3] bg-white pl-[14px]">
      <svg className="h-[21px] w-[21px]" viewBox="0 0 21 21" fill="none" stroke="#111" strokeWidth="1.500">
        <circle cx="13" cy="7.500" r="6.600" />
        <path d="M8.300 12.500L.8 20" />
      </svg>
      <span className="ml-[14px] whitespace-nowrap text-[18.500px] tracking-[-0.33px] text-[#2b2b2b]">Type here to search</span>
      <div className="ml-auto">
        <Football />
      </div>
    </div>
    <AppSlot w="w-[61px]">
      <svg className="h-[20px] w-[21px]" viewBox="0 0 21 20" fill="none" stroke="#000" strokeWidth="1.500">
        <path d="M1 0v3h12V0M1 20v-3h12v3M1.700 6h10.600v8H1.700zM18.500 0v5M18.500 11v9" />
        <rect x="17" y="6.500" width="3" height="3" fill="#000" stroke="none" />
      </svg>
    </AppSlot>
    <AppSlot w="w-[65px]"><Copilot /></AppSlot>
    <AppSlot w="w-[60px]"><Edge /></AppSlot>
    <AppSlot w="w-[63px]" running><Explorer /></AppSlot>
    <AppSlot w="w-[62px]"><Outlook /></AppSlot>
    <AppSlot w="w-[62px]"><SiBrave className="h-[31px] w-[27px] text-[#fb4b1c]" /></AppSlot>
    <div className="w-[1px]" />
    <AppSlot w="w-[61px]" line="w-[61px]" active running>
      <div className="relative">
        <Chrome />
        <span className="absolute left-[17px] top-[13px] text-[12px] font-semibold leading-[18px] text-white">A</span>
      </div>
    </AppSlot>
    <AppSlot w="w-[63px]" running>
      <div className="relative">
        <FaWhatsapp className="h-[33px] w-[33px] text-[#1c9658]" />
        <span className="absolute left-[20px] top-[15px] flex h-[22px] w-[22px] items-center justify-center rounded-full border border-[#666] bg-[#d9d9d9] text-[14px] tracking-[-1px]">17</span>
      </div>
    </AppSlot>
    <AppSlot w="w-[61px]" running><VSCode /></AppSlot>
    <AppSlot w="w-[62px]" running>
      <div className="flex h-[30px] w-[30px] items-center justify-center bg-[#020405] text-[21px] font-light text-[#1b78c8]">TL</div>
    </AppSlot>

    <div className="relative ml-[280px] shrink-0">
      <Weather />
      <span className="absolute left-[18.500px] top-[-1.500px] text-[12px] font-semibold leading-[18px] text-white">2</span>
    </div>
    <span className="ml-[9px] w-[161px] shrink-0 whitespace-nowrap text-[18px] tracking-[-0.4px]">
      <span className="mr-[11px]">28°C</span>Mostly cloudy
    </span>
    <svg className="ml-[29px] h-[9px] w-[16px] shrink-0" viewBox="0 0 16 9" fill="none" stroke="#111" strokeWidth="1.500">
      <path d="M.8 8.200L8 1l7.200 7.200" />
    </svg>
    <svg className="ml-[16px] h-[18px] w-[15px] shrink-0" viewBox="0 0 15 18" fill="none" stroke="#111" strokeWidth="1.400">
      <path d="M2.500 1.800c2-1.300 6-1.300 8 0M2.500 16.200c2 1.300 6 1.300 8 0" />
      <rect x="1" y="4.500" width="9" height="9" rx="1.500" />
      <path d="M10 8l3.800-2.500v7L10 10" />
    </svg>
    <svg className="ml-[11px] h-[21px] w-[21px] shrink-0" viewBox="0 0 21 21" fill="none" stroke="#111" strokeWidth="1.400">
      <path d="M19.500 9V1L1 3v15h9" />
      <path d="M6 9c1-3 6-3 7.500-.5M14 5.500V9h-3M14 12c-1 3-6 3-7.500.5M6 15.500V12h3" />
      <circle cx="15.800" cy="16" r="4.700" fill="#ff9500" stroke="none" />
    </svg>
    <svg className="ml-[9px] h-[15px] w-[21px] shrink-0" viewBox="0 0 21 15" fill="none" stroke="#111" strokeWidth="1.400">
      <path d="M6 2.500h12.500v11H5V8M18.500 6H20v4h-1.500" />
      <path d="M7.500 5h9v6.500h-9z" fill="#000" />
      <path d="M1 1v3.500h4V1M3 5v3h3" />
    </svg>
    <svg className="ml-[12px] h-[17px] w-[17px] shrink-0" viewBox="0 0 17 17" fill="none" stroke="#222" strokeWidth="1.300">
      <path d="M1 17C1 8 7 2 16 1.200" stroke="#8a8f98" />
      <path d="M5 17C5 10.500 9.500 6.500 16 5.800M9 17c0-4 3-6.800 7-7" />
      <circle cx="14.500" cy="14.800" r="2" fill="#111" stroke="none" />
    </svg>
    <svg className="ml-[10px] h-[18px] w-[21px] shrink-0" viewBox="0 0 21 18" fill="none" stroke="#111" strokeWidth="1.300">
      <path d="M1 6h2.500L8 2.200v13.600L3.500 12H1z" />
      <path d="M11 6.500c1 1.500 1 3.500 0 5M14 4c2.500 3 2.500 7 0 10M17 1.500c4 4.500 4 10.500 0 15" />
    </svg>
    <div className="ml-[7px] w-[40px] shrink-0 text-center text-[15px] leading-[22px] tracking-[-0.5px]">
      ENG<br />IN
    </div>
    <div className="ml-[8px] w-[74px] shrink-0 whitespace-nowrap text-center text-[15px] leading-[23px] tracking-[-0.4px]">
      8:07 PM<br />9/4/2025
    </div>
    <div className="relative ml-[20px] shrink-0">
      <svg className="h-[20px] w-[20px]" viewBox="0 0 20 20">
        <path d="M0 0h20v16H9l-5 4v-4H0z" />
        <path d="M3.500 4.500h13M3.500 8h13M3.500 11.500h9" stroke="#fff" strokeWidth="1.300" />
      </svg>
      <span className="absolute left-[9px] top-[9px] flex h-[21px] w-[21px] items-center justify-center rounded-full border border-[#777] bg-[#d5d5d5] text-[14px] font-semibold">2</span>
    </div>
    <div className="ml-auto mr-[5px] h-[50px] w-px bg-[#b3b9c8]" />
  </div>
);

export default function App() {
  return (
    <div className="h-[1080px] w-[1920px] overflow-hidden bg-white font-['Inter',sans-serif]">
      <Browser />
      <div className="flex h-[921px]">
        <Sidebar />
        <div className="relative h-[921px] w-[1600px] overflow-hidden">
          <Backdrop />
          <div className="absolute inset-0 flex justify-center bg-black/60 pt-[190px] backdrop-blur-[11px]">
            <Modal />
          </div>
          <div className="absolute left-[1234px] top-[814px] whitespace-nowrap font-['Open_Sans','Noto_Sans',sans-serif] text-[#979797]">
            <div className="text-[24px] leading-[34px] tracking-[-0.05px]">Activate Windows</div>
            <div className="text-[17.500px] leading-[24px] tracking-[-0.07px]">Go to Settings to activate Windows.</div>
          </div>
        </div>
      </div>
      <Taskbar />
    </div>
  );
}
